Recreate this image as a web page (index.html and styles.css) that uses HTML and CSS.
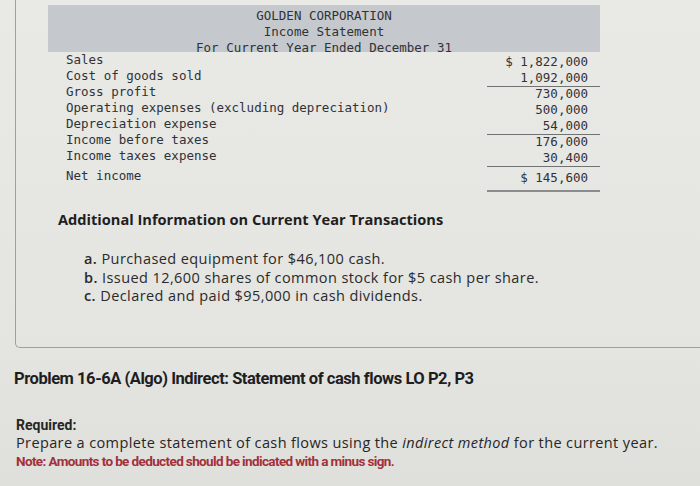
FILE: index.html
```html
<!DOCTYPE html>
<html>
<head>
<meta charset="utf-8">
<link rel="stylesheet" href="styles.css">
</head>
<body>
<div class="page">
  <div class="panel">
    <div class="statement">
      <div class="band">
        <div>GOLDEN CORPORATION</div>
        <div>Income Statement</div>
        <div>For Current Year Ended December 31</div>
      </div>
      <div class="rows">
        <div class="row"><span class="lbl">Sales</span><span class="amt">$ 1,822,000</span></div>
        <div class="row"><span class="lbl">Cost of goods sold</span><span class="amt ul">1,092,000</span></div>
        <div class="row"><span class="lbl">Gross profit</span><span class="amt">730,000</span></div>
        <div class="row"><span class="lbl">Operating expenses (excluding depreciation)</span><span class="amt">500,000</span></div>
        <div class="row"><span class="lbl">Depreciation expense</span><span class="amt ul">54,000</span></div>
        <div class="row"><span class="lbl">Income before taxes</span><span class="amt">176,000</span></div>
        <div class="row"><span class="lbl">Income taxes expense</span><span class="amt ul">30,400</span></div>
        <div class="row net"><span class="lbl">Net income</span><span class="amt dbl">$ 145,600</span></div>
      </div>
    </div>
    <h3 class="addl">Additional Information on Current Year Transactions</h3>
    <ul class="items">
      <li><b>a.</b> Purchased equipment for $46,100 cash.</li>
      <li><b>b.</b> Issued 12,600 shares of common stock for $5 cash per share.</li>
      <li><b>c.</b> Declared and paid $95,000 in cash dividends.</li>
    </ul>
  </div>
  <h2 class="problem">Problem 16-6A (Algo) Indirect: Statement of cash flows LO P2, P3</h2>
  <div class="required">
    <div class="req-title">Required:</div>
    <div class="prep">Prepare a complete statement of cash flows using the <i>indirect method</i> for the current year.</div>
    <div class="note">Note: Amounts to be deducted should be indicated with a minus sign.</div>
  </div>
</div>
</body>
</html>
```
FILE: styles.css
```css
html, body {
  margin: 0;
  padding: 0;
}
body {
  background: #e5e5e2;
  width: 700px;
  height: 486px;
  overflow: hidden;
  font-family: "Open Sans", "Liberation Sans", sans-serif;
  color: #262626;
}
.page {
  height: 486px;
  background: linear-gradient(180deg, #e9e9e6 0%, #e4e4e1 70%, #dfdfdc 100%);
}
.panel {
  margin-left: 15px;
  margin-right: -20px;
  height: 348px;
  box-sizing: border-box;
  border-left: 1px solid #9fa09e;
  border-bottom: 1px solid #9fa09e;
  border-bottom-left-radius: 5px;
  padding-top: 5px;
}
.statement {
  width: 552px;
  margin-left: 32px;
  font-family: "DejaVu Sans Mono", "Liberation Mono", monospace;
  font-size: 12.5px;
  color: #303236;
}
.band {
  background: #c5c9cd;
  height: 47px;
  box-sizing: border-box;
  padding-top: 3px;
  text-align: center;
  line-height: 16px;
}
.rows {
  padding-left: 18px;
}
.row {
  display: flex;
  justify-content: space-between;
  height: 16px;
  line-height: 16px;
}
.amt {
  width: 113px;
  box-sizing: border-box;
  text-align: right;
  padding-right: 12px;
  margin-top: 2px;
  height: 17px;
}
.ul {
  border-bottom: 1px solid #707274;
}
.net {
  margin-top: 4px;
}
.dbl {
  border-bottom: 2px solid #8a8c8e;
  height: 22px;
}
.addl {
  margin: 25px 0 0 42px;
  font-size: 14.6px;
  font-weight: bold;
  color: #1e1e1e;
}
.items {
  list-style: none;
  margin: 21px 0 0 68px;
  padding: 0;
  font-size: 14.5px;
  line-height: 18.5px;
  letter-spacing: 0.42px;
  color: #2a2a2a;
}
.items b {
  font-weight: 600;
}
.problem {
  margin: 21px 0 0 14px;
  font-family: "Roboto", sans-serif;
  font-size: 16.5px;
  letter-spacing: -0.45px;
  font-weight: bold;
  color: #1e1e1e;
}
.required {
  margin: 28px 0 0 16px;
  font-size: 14.5px;
  line-height: 18px;
}
.req-title {
  font-family: "Roboto", sans-serif;
  font-weight: bold;
  font-size: 14px;
}
.prep {
  letter-spacing: 0.38px;
}
.note {
  font-family: "Roboto", sans-serif;
  color: #a3303a;
  font-weight: bold;
  font-size: 13.5px;
  letter-spacing: -0.62px;
}
```
